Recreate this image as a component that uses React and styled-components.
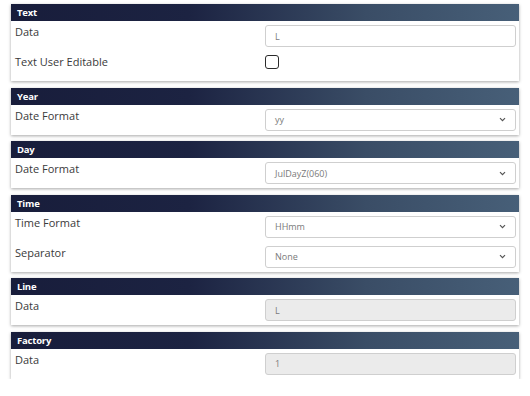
import React from "react";
import styled, { createGlobalStyle } from "styled-components";

const GlobalStyle = createGlobalStyle`
  body {
    margin: 0;
    background: #ffffff;
    font-family: "Open Sans", "Liberation Sans", sans-serif;
  }
`;

const Page = styled.div`
  width: 508px;
  padding: 4px 0 0 11px;
  display: flex;
  flex-direction: column;
  gap: 6.6px;
`;

const Panel = styled.section`
  background: #ffffff;
  box-shadow: 0 1px 3px rgba(0, 0, 0, 0.35);
`;

const Header = styled.div`
  height: 17px;
  display: flex;
  align-items: center;
  padding-left: 6px;
  background: linear-gradient(to right, #181d3b 0%, #1c2342 35%, #3a4d66 70%, #475f78 100%);
  color: #ffffff;
  font-size: 9.5px;
  font-weight: 700;
  letter-spacing: -0.2px;
`;

const Row = styled.div`
  height: 30px;
  display: grid;
  grid-template-columns: 254px 1fr;
  padding-right: 3px;
  box-sizing: border-box;
`;

const Label = styled.div`
  padding: 3px 0 0 4px;
  font-size: 11px;
  line-height: 16px;
  color: #3a3a3a;
`;

const Field = styled.div`
  padding-top: 4px;
  height: 22px;
`;

const Input = styled.div`
  height: 22px;
  box-sizing: border-box;
  border: 1px solid #cfcfcf;
  border-radius: 3px;
  background: ${(p) => (p.disabled ? "#ebebeb" : "#ffffff")};
  display: flex;
  align-items: center;
  justify-content: space-between;
  padding: 0 9px 0 9px;
  font-size: 9px;
  color: #7a7a7a;
`;

const Checkbox = styled.div`
  margin-top: 4px;
  width: 14px;
  height: 14px;
  box-sizing: border-box;
  border: 1.5px solid #2b2b2b;
  border-radius: 3px;
`;

const Chevron = () => (
  <svg width="7" height="5" viewBox="0 0 7 5">
    <path d="M1 1.2 L3.5 3.7 L6 1.2" fill="none" stroke="#555" strokeWidth="1.2" />
  </svg>
);

const TextRow = ({ label, value, disabled }) => (
  <Row>
    <Label>{label}</Label>
    <Field>
      <Input disabled={disabled}>{value}</Input>
    </Field>
  </Row>
);

const SelectRow = ({ label, value }) => (
  <Row>
    <Label>{label}</Label>
    <Field>
      <Input>
        <span>{value}</span>
        <Chevron />
      </Input>
    </Field>
  </Row>
);

export default function App() {
  return (
    <>
      <GlobalStyle />
      <Page>
        <Panel>
          <Header>Text</Header>
          <TextRow label="Data" value="L" />
          <Row>
            <Label>Text User Editable</Label>
            <div>
              <Checkbox />
            </div>
          </Row>
        </Panel>
        <Panel>
          <Header>Year</Header>
          <SelectRow label="Date Format" value="yy" />
        </Panel>
        <Panel>
          <Header>Day</Header>
          <SelectRow label="Date Format" value="JulDayZ(060)" />
        </Panel>
        <Panel>
          <Header>Time</Header>
          <SelectRow label="Time Format" value="HHmm" />
          <SelectRow label="Separator" value="None" />
        </Panel>
        <Panel>
          <Header>Line</Header>
          <TextRow label="Data" value="L" disabled />
        </Panel>
        <Panel>
          <Header>Factory</Header>
          <TextRow label="Data" value="1" disabled />
        </Panel>
      </Page>
    </>
  );
}
